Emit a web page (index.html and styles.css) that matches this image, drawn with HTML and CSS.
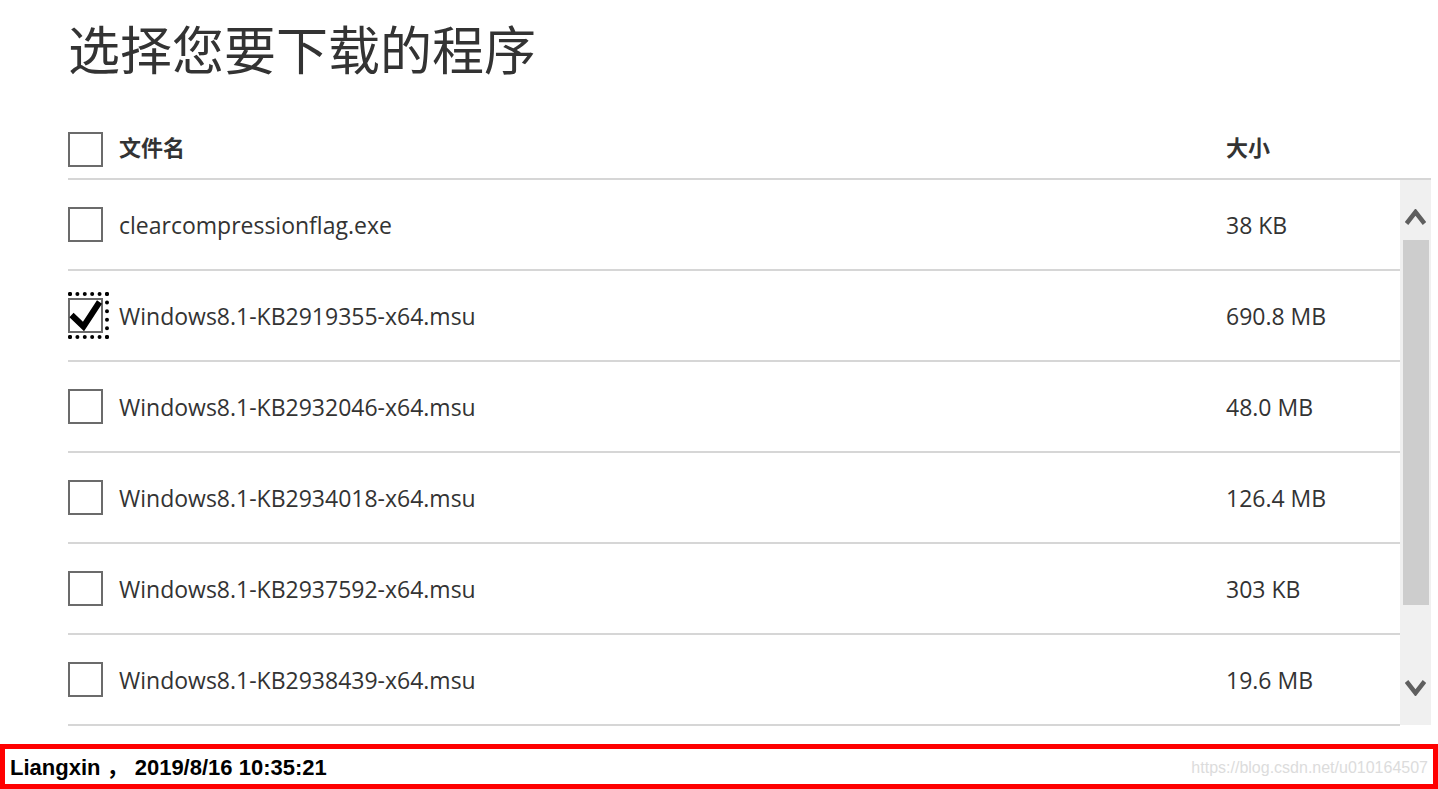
FILE: index.html
```html
<!DOCTYPE html>
<html lang="zh-CN">
<head>
<meta charset="utf-8">
<title>选择您要下载的程序</title>
<link rel="stylesheet" href="styles.css">
</head>
<body>
<div class="page">
  <h1 class="title">选择您要下载的程序</h1>
  <div class="header">
    <span class="box"></span>
    <span class="hname">文件名</span>
    <span class="hsize">大小</span>
  </div>
  <div class="body">
    <div class="list">
      <div class="row">
        <span class="cell"><span class="box"></span></span>
        <span class="name">clearcompressionflag.exe</span>
        <span class="size">38 KB</span>
      </div>
      <div class="row">
        <span class="cell">
          <span class="focus"></span>
          <span class="box checked"><svg class="tick" viewBox="0 0 35 35" width="35" height="35"><path d="M3.5 17 L15.5 28.5 L31.5 4" fill="none" stroke="#000" stroke-width="6" stroke-linejoin="miter" stroke-linecap="butt"/></svg></span>
        </span>
        <span class="name">Windows8.1-KB2919355-x64.msu</span>
        <span class="size">690.8 MB</span>
      </div>
      <div class="row">
        <span class="cell"><span class="box"></span></span>
        <span class="name">Windows8.1-KB2932046-x64.msu</span>
        <span class="size">48.0 MB</span>
      </div>
      <div class="row">
        <span class="cell"><span class="box"></span></span>
        <span class="name">Windows8.1-KB2934018-x64.msu</span>
        <span class="size">126.4 MB</span>
      </div>
      <div class="row">
        <span class="cell"><span class="box"></span></span>
        <span class="name">Windows8.1-KB2937592-x64.msu</span>
        <span class="size">303 KB</span>
      </div>
      <div class="row">
        <span class="cell"><span class="box"></span></span>
        <span class="name">Windows8.1-KB2938439-x64.msu</span>
        <span class="size">19.6 MB</span>
      </div>
    </div>
    <div class="scrollbar">
      <div class="btn up"><svg viewBox="0 0 21 16" width="21" height="16"><path d="M1.5 14.5 L10.5 3 L19.5 14.5" fill="none" stroke="#5f5f5f" stroke-width="4.5"/></svg></div>
      <div class="thumb"></div>
      <div class="spacer"></div>
      <div class="btn down"><svg viewBox="0 0 21 16" width="21" height="16"><path d="M1.5 1.5 L10.5 13 L19.5 1.5" fill="none" stroke="#5f5f5f" stroke-width="4.5"/></svg></div>
    </div>
  </div>
</div>
<div class="footer">
  <span class="stamp">Liangxin ， 2019/8/16 10:35:21</span>
  <span class="mark">https://blog.csdn.net/u010164507</span>
</div>
</body>
</html>
```
FILE: styles.css
```css
html, body {
  margin: 0;
  padding: 0;
  background: #fff;
  overflow: hidden;
}
body {
  width: 1438px;
  height: 789px;
  font-family: "Open Sans", "Noto Sans", "Noto Sans CJK SC", sans-serif;
  color: #333;
}
.page {
  padding-left: 68px;
  width: 1363px;
}
.title {
  margin: 0;
  height: 95px;
  line-height: 95px;
  font-family: "Noto Sans CJK SC", sans-serif;
  font-weight: 400;
  font-size: 52px;
  color: #333;
}
.header {
  margin-top: 25px;
  height: 58px;
  border-bottom: 2px solid #d6d6d6;
  display: flex;
  align-items: center;
}
.box {
  box-sizing: border-box;
  display: block;
  width: 35px;
  height: 35px;
  border: 2px solid #6b6b6b;
  background: #fff;
  position: relative;
  z-index: 1;
}
.hname, .hsize {
  font-family: "Noto Sans CJK SC", sans-serif;
  font-weight: 700;
  font-size: 22px;
  color: #333;
  padding-bottom: 7px;
}
.hname {
  margin-left: 16px;
  flex: 1;
}
.hsize {
  width: 205px;
}
.body {
  display: flex;
  height: 546px;
}
.list {
  width: 1332px;
}
.row {
  height: 89px;
  border-bottom: 2px solid #d6d6d6;
  display: flex;
  align-items: center;
  font-size: 23px;
}
.cell {
  position: relative;
  width: 35px;
  height: 35px;
}
.tick {
  position: absolute;
  left: -2px;
  top: -2px;
}
.focus {
  position: absolute;
  left: 0;
  top: -6px;
  width: 41px;
  height: 47px;
  box-sizing: border-box;
  border: 4px dotted #000;
}
.name {
  margin-left: 16px;
  flex: 1;
}
.size {
  width: 174px;
}
.scrollbar {
  width: 31px;
  height: 545px;
  background: #f0f0f0;
  display: flex;
  flex-direction: column;
}
.btn {
  display: flex;
  justify-content: center;
}
.btn.up {
  align-items: flex-end;
  padding-bottom: 15px;
  height: 45px;
}
.btn.down {
  align-items: flex-start;
  padding-top: 15px;
  height: 45px;
}
.thumb {
  height: 365px;
  margin: 0 2px 0 3px;
  background: #cdcdcd;
}
.spacer {
  flex: 1;
}
.footer {
  position: absolute;
  left: 0;
  top: 744px;
  box-sizing: border-box;
  width: 1438px;
  height: 45px;
  border: 5px solid #ff0000;
  display: flex;
  align-items: center;
  justify-content: space-between;
  padding: 0 5px;
}
.stamp {
  font-family: "Liberation Sans", Arial, "Noto Sans CJK SC", sans-serif;
  font-weight: 700;
  font-size: 22px;
  color: #000;
  padding-bottom: 3px;
}
.mark {
  font-family: "Liberation Sans", Arial, sans-serif;
  font-size: 16px;
  color: #dcdcdc;
  padding-top: 2px;
}
```
